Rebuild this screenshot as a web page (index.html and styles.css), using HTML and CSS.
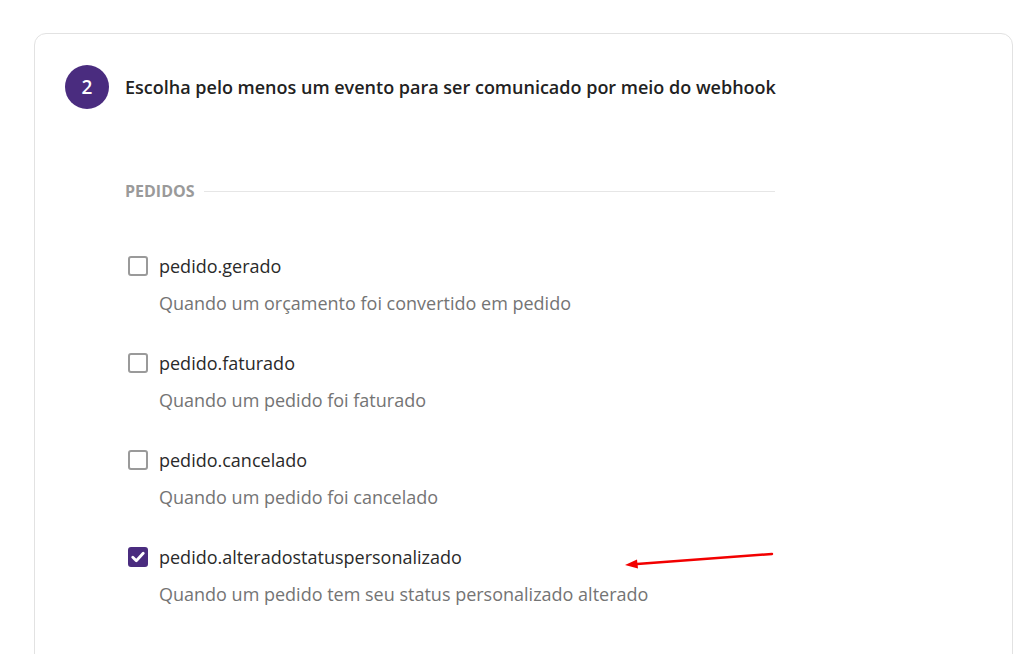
FILE: index.html
```html
<!DOCTYPE html>
<html lang="pt">
<head>
<meta charset="utf-8">
<link rel="stylesheet" href="styles.css">
</head>
<body>
<div class="card">
  <div class="step">
    <div class="step-num">2</div>
    <div class="step-title">Escolha pelo menos um evento para ser comunicado por meio do webhook</div>
  </div>
  <div class="group">
    <div class="group-head"><span>PEDIDOS</span><div class="rule"></div></div>
    <div class="item">
      <div class="row"><span class="box"></span><span class="name">pedido.gerado</span></div>
      <div class="desc">Quando um orçamento foi convertido em pedido</div>
    </div>
    <div class="item">
      <div class="row"><span class="box"></span><span class="name">pedido.faturado</span></div>
      <div class="desc">Quando um pedido foi faturado</div>
    </div>
    <div class="item">
      <div class="row"><span class="box"></span><span class="name">pedido.cancelado</span></div>
      <div class="desc">Quando um pedido foi cancelado</div>
    </div>
    <div class="item">
      <div class="row"><span class="box checked"><svg width="14" height="12" viewBox="0 0 14 12"><path d="M1.8 6.3 L5.3 9.8 L12.2 2.3" fill="none" stroke="#fff" stroke-width="2.8" stroke-linecap="round" stroke-linejoin="round"/></svg></span><span class="name">pedido.alteradostatuspersonalizado</span></div>
      <div class="desc">Quando um pedido tem seu status personalizado alterado</div>
    </div>
  </div>
  <svg class="arrow" width="160" height="24" viewBox="0 0 160 24">
    <line x1="149" y1="3" x2="14" y2="13" stroke="#f20000" stroke-width="2.5" stroke-linecap="round"/>
    <polygon points="2,14 14,8.5 15,17.5" fill="#f20000"/>
  </svg>
</div>
</body>
</html>
```
FILE: styles.css
```css
html, body {
  margin: 0;
  padding: 0;
  background: #fff;
}
body {
  font-family: "Open Sans", "Noto Sans", sans-serif;
  padding: 33px 16px 0 34px;
  height: 654px;
  overflow: hidden;
  box-sizing: border-box;
}
.card {
  position: relative;
  border: 1px solid #e2e2e2;
  border-radius: 12px;
  height: 700px;
  padding: 31px 0 0 30px;
  box-sizing: border-box;
}
.step {
  display: flex;
  align-items: center;
  gap: 16px;
}
.step-num {
  width: 44px;
  height: 44px;
  border-radius: 50%;
  background: #4a2c7f;
  color: #fff;
  font-weight: 600;
  font-size: 19px;
  display: flex;
  align-items: center;
  justify-content: center;
}
.step-title {
  font-size: 18px;
  font-weight: 600;
  color: #222;
}
.group {
  margin: 71px 0 0 60px;
  width: 650px;
}
.group-head {
  display: flex;
  align-items: center;
  gap: 9px;
  height: 22px;
  font-size: 16px;
  font-weight: 700;
  color: #9a9a9a;
}
.rule {
  flex: 1;
  height: 1px;
  background: #e6e6e6;
}
.group-head + .item {
  margin-top: 51px;
}
.item + .item {
  margin-top: 34px;
}
.row {
  display: flex;
  align-items: center;
  gap: 11px;
  height: 26px;
}
.box {
  width: 16px;
  height: 16px;
  border: 2px solid #9a9a9a;
  border-radius: 3px;
  margin-left: 3px;
  display: flex;
  align-items: center;
  justify-content: center;
  box-sizing: content-box;
}
.box.checked {
  background: #4a2c7f;
  border-color: #4a2c7f;
}
.name {
  font-size: 18px;
  color: #2a2a2a;
  line-height: 26px;
}
.desc {
  margin-top: 11px;
  padding-left: 34px;
  font-size: 18px;
  color: #747474;
  line-height: 26px;
}
.arrow {
  position: absolute;
  left: 588px;
  top: 517px;
}
```
